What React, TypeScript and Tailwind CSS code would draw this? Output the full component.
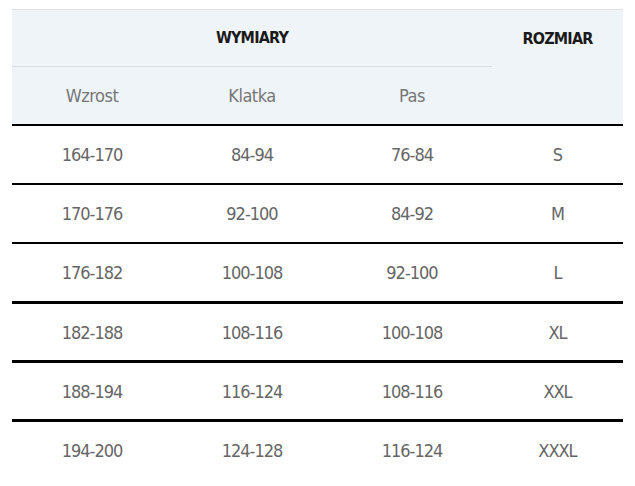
import React from "react";

const rows: [string, string, string, string][] = [
  ["164-170", "84-94", "76-84", "S"],
  ["170-176", "92-100", "84-92", "M"],
  ["176-182", "100-108", "92-100", "L"],
  ["182-188", "108-116", "100-108", "XL"],
  ["188-194", "116-124", "108-116", "XXL"],
  ["194-200", "124-128", "116-124", "XXXL"],
];

export default function App() {
  return (
    <div className="w-[635px] h-[486px] bg-white pt-[9px] pl-[12px] font-['Liberation_Sans_Narrow','DejaVu_Sans_Condensed',sans-serif]">
      <div className="w-[611px]">
        <div className="flex border-t border-[#dde2e7] bg-[#eff4f9]">
          <div className="w-[480px] flex flex-col">
            <div className="h-[57px] flex items-center justify-center border-b border-[#d9dee4] text-[16px] font-bold text-[#1a1a1a] tracking-[-0.8px]">
              WYMIARY
            </div>
            <div className="h-[57px] flex text-[18px] text-[#777] tracking-[-0.5px]">
              <div className="w-[160px] flex items-center justify-center">Wzrost</div>
              <div className="w-[160px] flex items-center justify-center">Klatka</div>
              <div className="w-[160px] flex items-center justify-center">Pas</div>
            </div>
          </div>
          <div className="w-[131px] flex flex-col">
            <div className="h-[57px] flex items-center justify-center text-[16px] font-bold text-[#1a1a1a] tracking-[-0.8px]">
              ROZMIAR
            </div>
          </div>
        </div>
        {rows.map((r, i) => (
          <div
            key={i}
            className={
              i < 3
                ? "flex h-[59px] border-t-2 border-black text-[18px] text-[#666] tracking-[-1px]"
                : "flex h-[59px] border-t-[3px] border-black text-[18px] text-[#666] tracking-[-1px]"
            }
          >
            <div className="w-[160px] flex items-center justify-center">{r[0]}</div>
            <div className="w-[160px] flex items-center justify-center">{r[1]}</div>
            <div className="w-[160px] flex items-center justify-center">{r[2]}</div>
            <div className="w-[131px] flex items-center justify-center">{r[3]}</div>
          </div>
        ))}
      </div>
    </div>
  );
}
